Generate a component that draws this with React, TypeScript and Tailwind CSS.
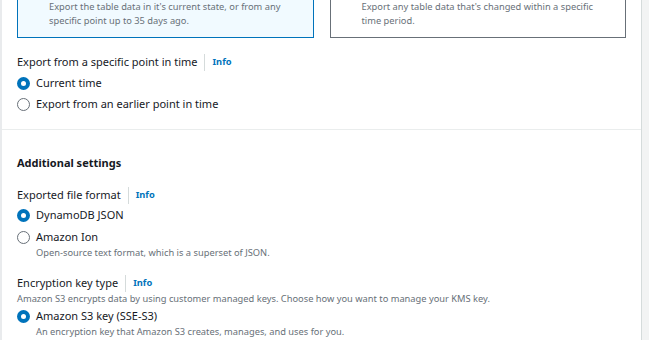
import React from 'react';

// petit bouton radio façon console AWS
function Radio({ checked }: { checked?: boolean }) {
  if (checked) {
    return (
      <span className="inline-flex h-[13px] w-[13px] shrink-0 items-center justify-center rounded-full bg-[#0073bb]">
        <span className="h-[5px] w-[5px] rounded-full bg-white" />
      </span>
    );
  }
  return <span className="inline-block h-[13px] w-[13px] shrink-0 rounded-full border border-[#687078] bg-white" />;
}

function Label({ text }: { text: string }) {
  return (
    <div className="flex items-center text-[11px] leading-[18px] text-[#16191f]">
      <span>{text}</span>
      <span className="mx-[7px] h-[17px] w-px bg-[#d5dbdb]" />
      <span className="text-[9.3px] font-bold text-[#0073bb]">Info</span>
    </div>
  );
}

function Option({ checked, text, desc }: { checked?: boolean; text: string; desc?: string }) {
  return (
    <div>
      <div className="flex items-center gap-[6px] text-[11px] leading-[18px] text-[#16191f]">
        <Radio checked={checked} />
        <span>{text}</span>
      </div>
      {desc && <p className="pl-[19px] text-[9.3px] leading-[14px] text-[#687078]">{desc}</p>}
    </div>
  );
}

export default function App() {
  return (
    <div className="flex h-[340px] w-[649px] overflow-hidden bg-[#f2f3f3]" style={{ fontFamily: '"Noto Sans", sans-serif' }}>
      <div className="w-[642px] shrink-0 border-l-2 border-r border-l-[#e9ebed] border-r-[#d5dbdb] bg-white">
        {/* tuiles type d'export */}
        <div className="-mt-[31px] grid grid-cols-2 gap-4 px-[15px]">
          <div className="border border-[#0073bb] bg-[#f1faff] pb-[9px] pl-[31px] pr-4 pt-[8px]">
            <div className="-ml-[18px] flex items-center gap-[6px] text-[11px] leading-[18px] text-[#16191f]">
              <Radio checked />
              <span>Full export</span>
            </div>
            <p className="mt-[4px] text-[9.3px] leading-[14px] text-[#687078]">
              Export the table data in it's current state, or from any specific point up to 35 days ago.
            </p>
          </div>
          <div className="border border-[#687078] bg-white pb-[9px] pl-[31px] pr-4 pt-[8px]">
            <div className="-ml-[18px] flex items-center gap-[6px] text-[11px] leading-[18px] text-[#16191f]">
              <Radio />
              <span>Incremental export</span>
            </div>
            <p className="mt-[4px] text-[9.3px] leading-[14px] text-[#687078]">
              Export any table data that's changed within a specific time period.
            </p>
          </div>
        </div>

        <div className="px-[15px] pb-[16px] pt-[15px]">
          <Label text="Export from a specific point in time" />
          <div className="mt-[3px] flex flex-col gap-[3px]">
            <Option checked text="Current time" />
            <Option text="Export from an earlier point in time" />
          </div>
        </div>

        <div className="border-t border-[#eaeded] px-[15px] pt-[24px]">
          <h2 className="text-[11px] font-bold leading-[18px] text-[#16191f]">Additional settings</h2>

          <div className="mt-[14px]">
            <Label text="Exported file format" />
            <div className="mt-[2px] flex flex-col gap-[4px]">
              <Option checked text="DynamoDB JSON" />
              <Option text="Amazon Ion" desc="Open-source text format, which is a superset of JSON." />
            </div>
          </div>

          <div className="mt-[14px]">
            <Label text="Encryption key type" />
            <p className="text-[9.3px] leading-[14px] text-[#687078]">
              Amazon S3 encrypts data by using customer managed keys. Choose how you want to manage your KMS key.
            </p>
            <div className="mt-[1px]">
              <Option checked text="Amazon S3 key (SSE-S3)" desc="An encryption key that Amazon S3 creates, manages, and uses for you." />
            </div>
          </div>
        </div>
      </div>
    </div>
  );
}
